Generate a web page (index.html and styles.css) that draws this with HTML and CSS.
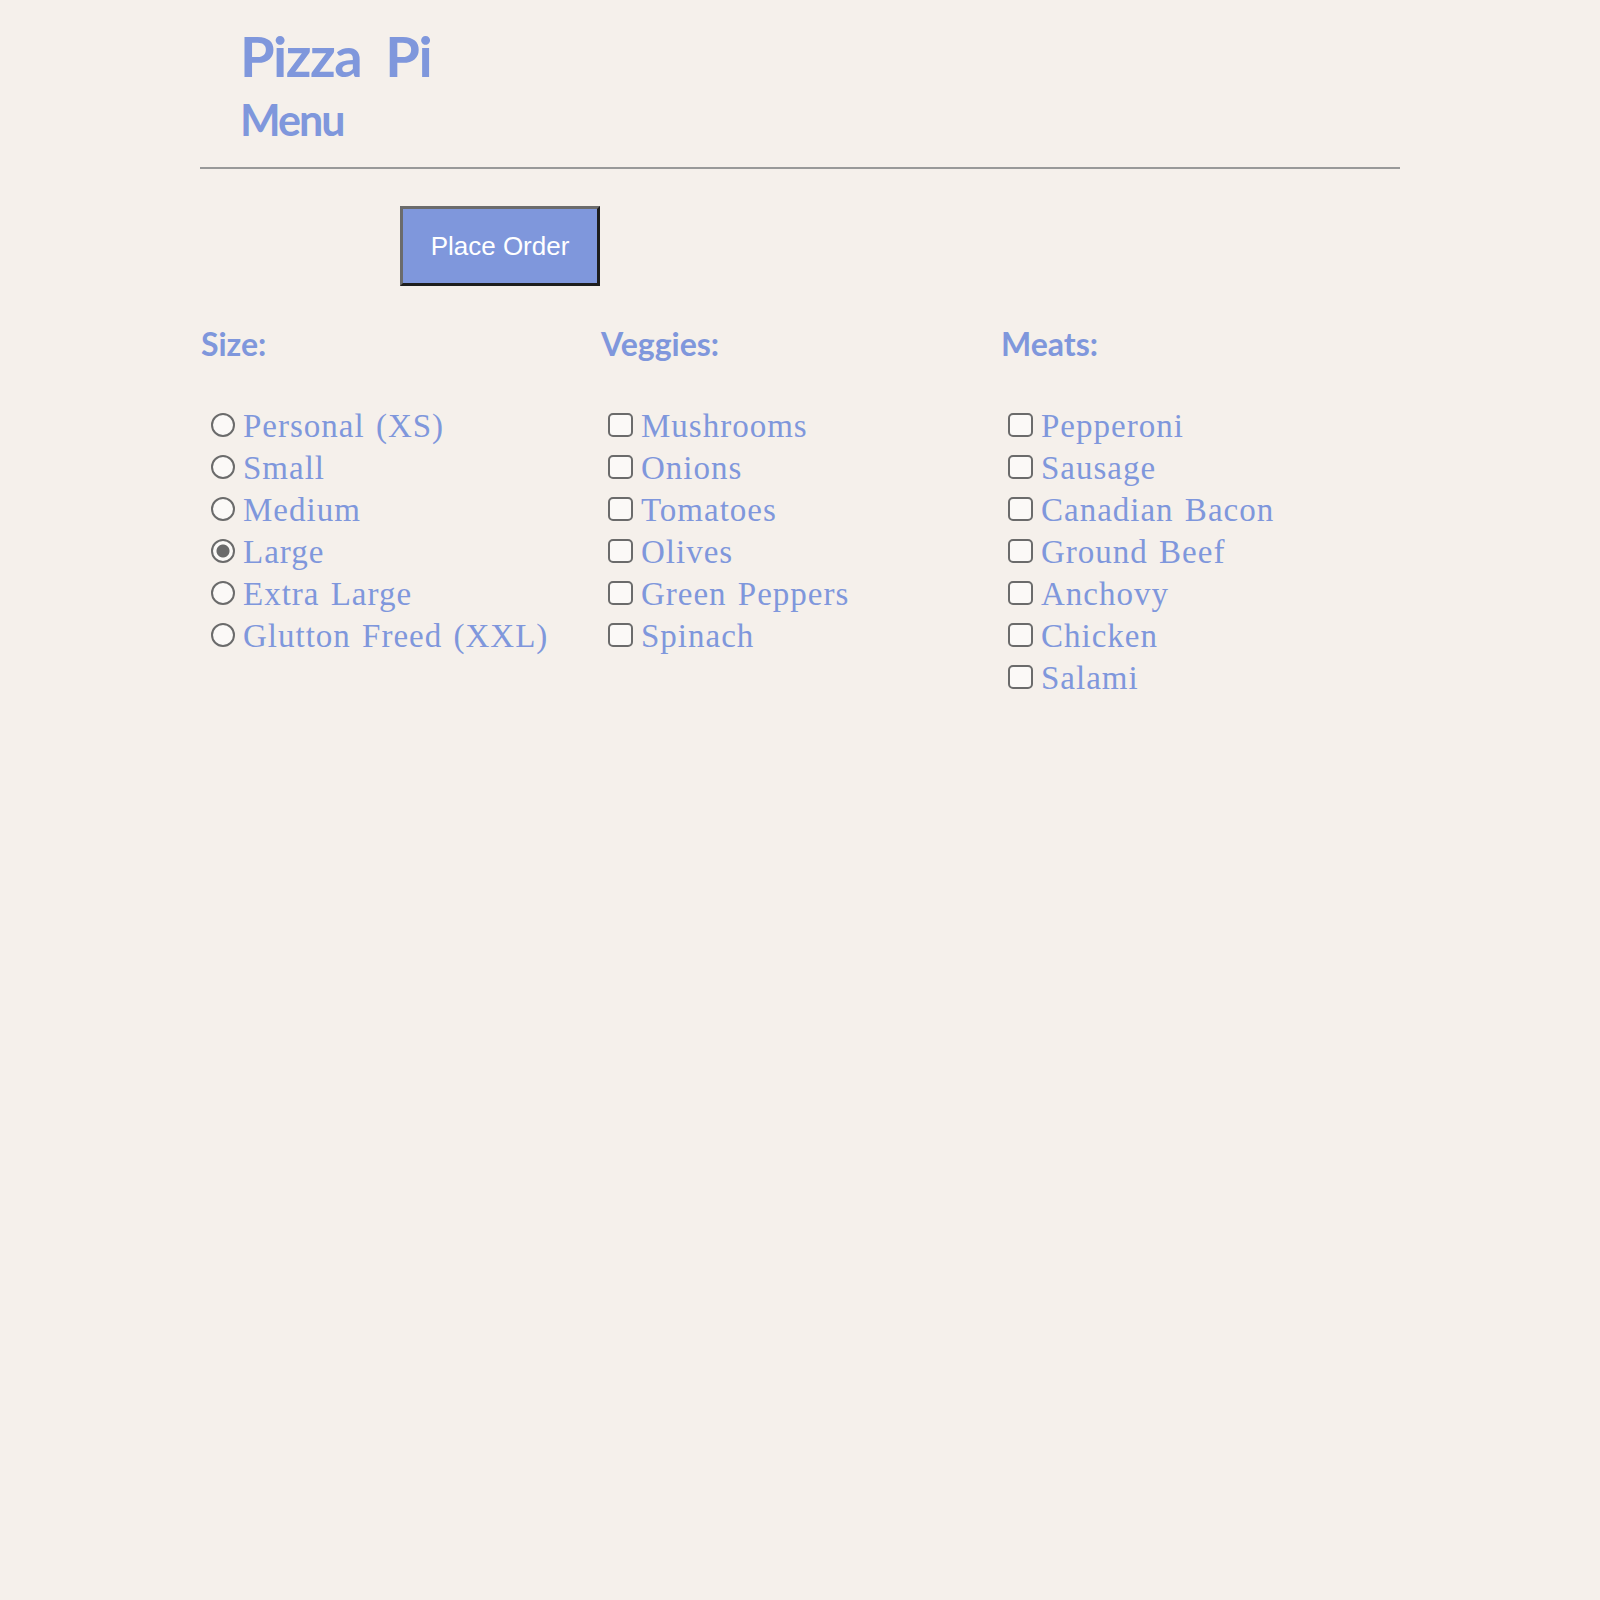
FILE: index.html
```html
<!DOCTYPE html>
<html lang="en">
<head>
<meta charset="utf-8">
<title>Pizza Pi Menu</title>
<link rel="stylesheet" href="styles.css">
</head>
<body>
<div class="page">
  <header class="header">
    <h1 class="title">Pizza Pi</h1>
    <h2 class="subtitle">Menu</h2>
  </header>
  <hr class="rule">
  <div class="actions">
    <button class="order-btn" type="button">Place Order</button>
  </div>
  <div class="columns">
    <section class="col">
      <h3 class="col-title">Size:</h3>
      <ul class="options">
        <li><label class="opt"><input type="radio" name="size" class="radio">Personal (XS)</label></li>
        <li><label class="opt"><input type="radio" name="size" class="radio">Small</label></li>
        <li><label class="opt"><input type="radio" name="size" class="radio">Medium</label></li>
        <li><label class="opt"><input type="radio" name="size" class="radio" checked>Large</label></li>
        <li><label class="opt"><input type="radio" name="size" class="radio">Extra Large</label></li>
        <li><label class="opt"><input type="radio" name="size" class="radio">Glutton Freed (XXL)</label></li>
      </ul>
    </section>
    <section class="col">
      <h3 class="col-title">Veggies:</h3>
      <ul class="options checks">
        <li><label class="opt"><input type="checkbox" class="check">Mushrooms</label></li>
        <li><label class="opt"><input type="checkbox" class="check">Onions</label></li>
        <li><label class="opt"><input type="checkbox" class="check">Tomatoes</label></li>
        <li><label class="opt"><input type="checkbox" class="check">Olives</label></li>
        <li><label class="opt"><input type="checkbox" class="check">Green Peppers</label></li>
        <li><label class="opt"><input type="checkbox" class="check">Spinach</label></li>
      </ul>
    </section>
    <section class="col">
      <h3 class="col-title">Meats:</h3>
      <ul class="options checks">
        <li><label class="opt"><input type="checkbox" class="check">Pepperoni</label></li>
        <li><label class="opt"><input type="checkbox" class="check">Sausage</label></li>
        <li><label class="opt"><input type="checkbox" class="check">Canadian Bacon</label></li>
        <li><label class="opt"><input type="checkbox" class="check">Ground Beef</label></li>
        <li><label class="opt"><input type="checkbox" class="check">Anchovy</label></li>
        <li><label class="opt"><input type="checkbox" class="check">Chicken</label></li>
        <li><label class="opt"><input type="checkbox" class="check">Salami</label></li>
      </ul>
    </section>
  </div>
</div>
</body>
</html>
```

FILE: styles.css
```css
html, body {
  margin: 0;
  padding: 0;
  background: #f5f0eb;
}

body {
  color: #7f97dc;
  font-family: "Liberation Serif", serif;
}

.page {
  width: 1200px;
  margin-left: 200px;
  padding-top: 21px;
}

.header {
  padding-left: 40px;
}

.title {
  margin: 0;
  font-family: Lato, sans-serif;
  font-weight: 700;
  font-size: 56px;
  line-height: 70px;
  word-spacing: 12px;
  letter-spacing: -1.5px;
}

.subtitle {
  margin: 3px 0 0;
  font-family: Lato, sans-serif;
  font-weight: 700;
  font-size: 43px;
  line-height: 52px;
  letter-spacing: -2px;
}

.rule {
  margin: 21px 0 0;
  border: 0;
  border-top: 2px solid #999;
  height: 0;
}

.actions {
  padding-left: 200px;
  margin-top: 37px;
}

.order-btn {
  width: 200px;
  height: 80px;
  background: #7f97dc;
  color: #fff;
  font-family: "Liberation Sans", Arial, sans-serif;
  font-size: 26px;
  border: 3px solid;
  border-color: #6b6b6b #1e1e1e #1e1e1e #6b6b6b;
  padding: 0;
}

.columns {
  display: grid;
  grid-template-columns: repeat(3, 400px);
  margin-top: 38px;
}

.col-title {
  margin: 0;
  font-family: Lato, sans-serif;
  font-weight: 700;
  font-size: 32px;
  line-height: 40px;
  padding-left: 1px;
}

.options {
  list-style: none;
  margin: 41px 0 0;
  padding: 0 0 0 11px;
}

.options.checks {
  padding-left: 8px;
}

.opt {
  display: flex;
  align-items: center;
  gap: 8px;
  height: 42px;
  font-size: 33px;
  letter-spacing: 1px;
  word-spacing: 2px;
}

.radio, .check {
  appearance: none;
  -webkit-appearance: none;
  margin: 0;
  width: 24px;
  height: 24px;
  flex: none;
  border: 2px solid #6b6b6b;
  background: #fbf9f7;
  box-sizing: border-box;
  position: relative;
  top: -1px;
}

.radio {
  border-radius: 50%;
}

.radio:checked {
  background: radial-gradient(circle, #6b6b6b 0 6px, #fbf9f7 7px);
}

.check {
  width: 25px;
  border-radius: 5px;
}
```
